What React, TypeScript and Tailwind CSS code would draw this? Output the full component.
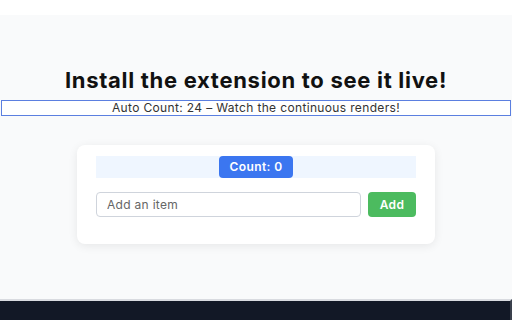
import React, { useState } from 'react';

const App: React.FC = () => {
  const [count, setCount] = useState(0);
  const [item, setItem] = useState('');
  const autoCount = 24;

  return (
    <div className="flex h-[320px] w-[512px] flex-col overflow-hidden bg-[#f9fafb] font-['Inter',sans-serif]">
      <div className="h-[15px] bg-white" />
      <div className="flex flex-1 flex-col items-center">
        <h1 className="mt-[52px] text-[22px] font-bold leading-[26px] tracking-[0.7px] text-[#111]">
          Install the extension to see it live!
        </h1>
        <div className="mt-[7px] w-[510px] border-[1.5px] border-[#5b7fe0] bg-white text-center text-[12px] leading-[14px] tracking-[0.35px] text-[#333]">
          Auto Count: {autoCount} – Watch the continuous renders!
        </div>
        <div className="mt-[29px] w-[358px] rounded-lg bg-white px-[19px] pb-[27px] pt-[11px] shadow-[0_2px_10px_rgba(0,0,0,0.08)]">
          <div className="flex h-[22px] justify-center bg-[#eff6ff]">
            <button
              onClick={() => setCount(count + 1)}
              className="w-[74px] rounded-sm bg-[#3b76f0] text-[12px] font-semibold tracking-[0.4px] text-white"
            >
              Count: {count}
            </button>
          </div>
          <div className="mt-[14px] flex gap-[7px]">
            <input
              value={item}
              onChange={(e) => setItem(e.target.value)}
              placeholder="Add an item"
              className="h-[25px] flex-1 rounded-sm border border-[#cfd4dc] px-[10px] text-[12px] tracking-[0.3px] text-[#333] placeholder:text-[#666] outline-none"
            />
            <button className="h-[25px] w-[48px] rounded-sm bg-[#4cbb5f] text-[12px] font-semibold tracking-[0.4px] text-white">
              Add
            </button>
          </div>
        </div>
      </div>
      <div className="h-[21px] border-r-2 border-t-2 border-[#d9dbe0] border-r-[#3a404c] bg-[#121826]" />
    </div>
  );
};

export default App;
